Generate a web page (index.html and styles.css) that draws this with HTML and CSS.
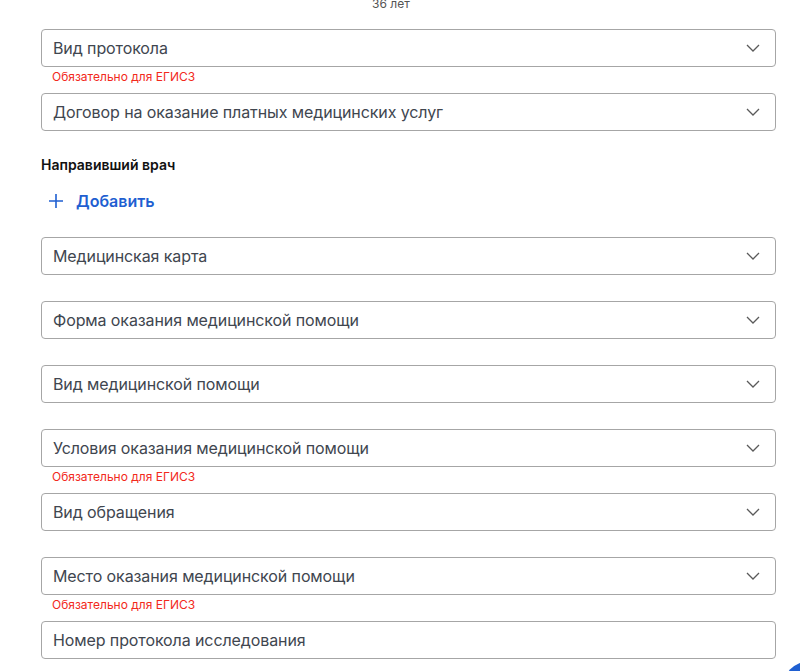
FILE: index.html
```html
<!DOCTYPE html>
<html lang="ru">
<head>
    <meta charset="UTF-8">
    <meta name="viewport" content="width=device-width, initial-scale=1.0">
    <title>Протокол приёма</title>
    <link rel="stylesheet" href="styles.css">
</head>
<body>
    <div class="form">
        <div class="patient">
            <div class="patient-name">Сергеев Юрий</div>
            <div class="patient-age">36 лет</div>
        </div>

        <div class="field with-hint">
            <div class="select">
                <span>Вид протокола</span>
                <svg class="chevron" width="14" height="8" viewBox="0 0 14 8"><polyline points="1,1 7,7 13,1"/></svg>
            </div>
            <div class="hint">Обязательно для ЕГИСЗ</div>
        </div>

        <div class="field">
            <div class="select">
                <span>Договор на оказание платных медицинских услуг</span>
                <svg class="chevron" width="14" height="8" viewBox="0 0 14 8"><polyline points="1,1 7,7 13,1"/></svg>
            </div>
        </div>

        <div class="section-title">Направивший врач</div>
        <button class="add-button">
            <svg width="16" height="16" viewBox="0 0 16 16"><path d="M8 1v14M1 8h14"/></svg>
            Добавить
        </button>

        <div class="field">
            <div class="select">
                <span>Медицинская карта</span>
                <svg class="chevron" width="14" height="8" viewBox="0 0 14 8"><polyline points="1,1 7,7 13,1"/></svg>
            </div>
        </div>

        <div class="field">
            <div class="select">
                <span>Форма оказания медицинской помощи</span>
                <svg class="chevron" width="14" height="8" viewBox="0 0 14 8"><polyline points="1,1 7,7 13,1"/></svg>
            </div>
        </div>

        <div class="field">
            <div class="select">
                <span>Вид медицинской помощи</span>
                <svg class="chevron" width="14" height="8" viewBox="0 0 14 8"><polyline points="1,1 7,7 13,1"/></svg>
            </div>
        </div>

        <div class="field with-hint">
            <div class="select">
                <span>Условия оказания медицинской помощи</span>
                <svg class="chevron" width="14" height="8" viewBox="0 0 14 8"><polyline points="1,1 7,7 13,1"/></svg>
            </div>
            <div class="hint">Обязательно для ЕГИСЗ</div>
        </div>

        <div class="field">
            <div class="select">
                <span>Вид обращения</span>
                <svg class="chevron" width="14" height="8" viewBox="0 0 14 8"><polyline points="1,1 7,7 13,1"/></svg>
            </div>
        </div>

        <div class="field with-hint">
            <div class="select">
                <span>Место оказания медицинской помощи</span>
                <svg class="chevron" width="14" height="8" viewBox="0 0 14 8"><polyline points="1,1 7,7 13,1"/></svg>
            </div>
            <div class="hint">Обязательно для ЕГИСЗ</div>
        </div>

        <div class="field">
            <div class="select input">
                <span>Номер протокола исследования</span>
            </div>
        </div>
    </div>

    <div class="fab"></div>
</body>
</html>
```

FILE: styles.css
```css
* {
    margin: 0;
    padding: 0;
    box-sizing: border-box;
}

body {
    font-family: Inter, 'Noto Sans', sans-serif;
    background: white;
    color: #40464f;
    overflow: hidden;
}

.form {
    width: 735px;
    margin-left: 41px;
}

.patient {
    display: flex;
    height: 29px;
}

.patient-name {
    font-size: 20px;
    font-weight: 600;
    color: #3d5277;
    line-height: 24px;
    margin-top: -23px;
    margin-left: 56px;
    width: 275px;
}

.patient-age {
    font-size: 12px;
    color: #555;
    margin-top: -4px;
    line-height: 16px;
}

.field {
    margin-bottom: 26px;
}

.field.with-hint {
    margin-bottom: 0;
}

.select {
    display: flex;
    justify-content: space-between;
    align-items: center;
    height: 38px;
    padding: 0 15px 0 11px;
    border: 1px solid #a6a6a6;
    border-radius: 4px;
    font-size: 16px;
    letter-spacing: -0.1px;
    color: #40464f;
}

.chevron polyline {
    fill: none;
    stroke: #5a5a5a;
    stroke-width: 1.3;
}

.hint {
    font-size: 12px;
    line-height: 16px;
    color: #f2291c;
    padding-left: 11px;
    margin-top: 2px;
    height: 24px;
}

.section-title {
    font-size: 14px;
    font-weight: 600;
    color: #111;
    line-height: 17px;
    margin-top: -1px;
}

.add-button {
    display: flex;
    align-items: center;
    gap: 12px;
    height: 32px;
    margin: 12px 0 20px 7px;
    background: none;
    border: none;
    font-family: inherit;
    font-size: 16px;
    font-weight: 600;
    color: #1f5fd1;
    cursor: pointer;
}

.add-button path {
    stroke: #1f5fd1;
    stroke-width: 1.6;
}

.fab {
    position: fixed;
    right: -38px;
    bottom: -46px;
    width: 56px;
    height: 56px;
    border-radius: 50%;
    background: #1f5fd1;
}
```
